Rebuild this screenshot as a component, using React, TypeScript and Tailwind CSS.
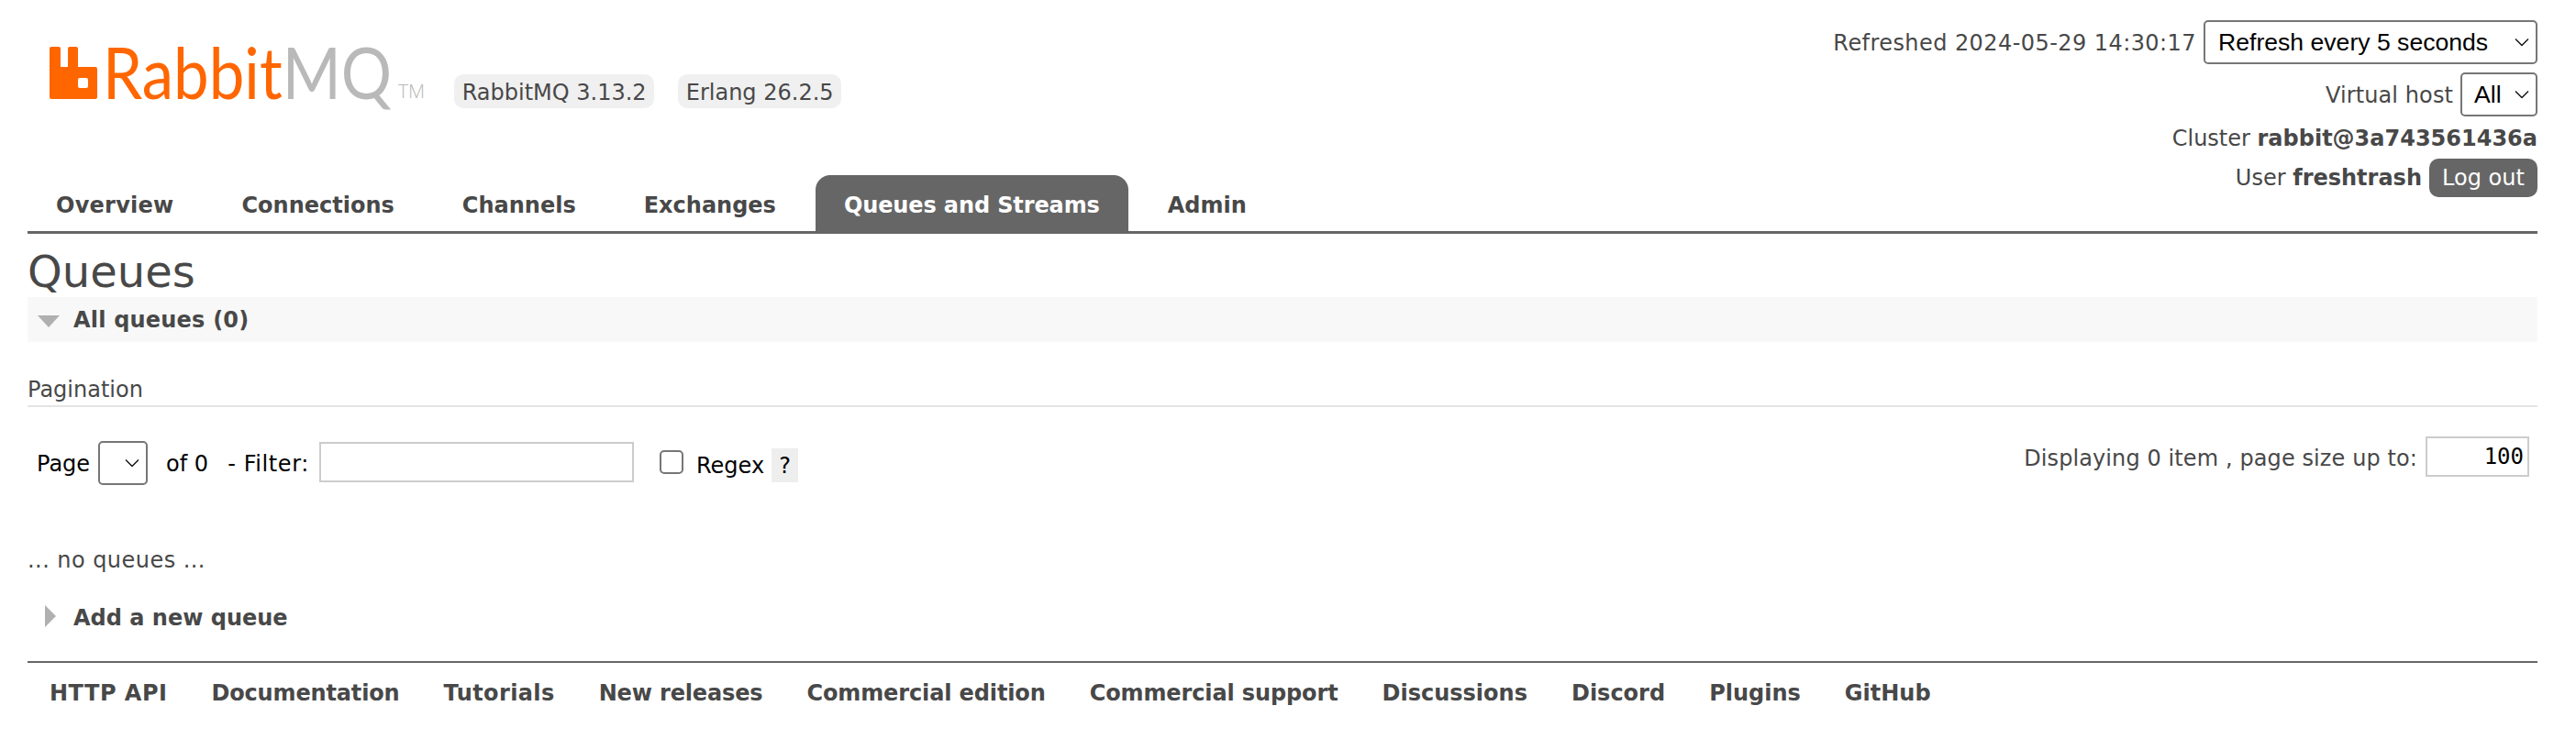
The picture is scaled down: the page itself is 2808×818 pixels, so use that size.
const tabs = [
  { label: 'Overview', text: 'tracking-[0.25px]' },
  { label: 'Connections', text: '' },
  { label: 'Channels', text: '' },
  { label: 'Exchanges', text: '' },
  { label: 'Queues and Streams', text: 'tracking-[-0.12px]' },
  { label: 'Admin', text: '' },
];

const footerLinks = [
  { label: 'HTTP API', text: 'tracking-[0.5px]' },
  { label: 'Documentation', text: 'tracking-[-0.15px]' },
  { label: 'Tutorials', text: 'tracking-[0.4px]' },
  { label: 'New releases', text: 'tracking-[-0.15px]' },
  { label: 'Commercial edition', text: 'tracking-[-0.12px]' },
  { label: 'Commercial support', text: 'tracking-[-0.12px]' },
  { label: 'Discussions', text: '' },
  { label: 'Discord', text: '' },
  { label: 'Plugins', text: '' },
  { label: 'GitHub', text: '' },
];

const Logo = () => (
  <div className="flex items-start text-[#ff6600]">
    <svg width="52" height="57" viewBox="0 0 52 57" className="mt-[1px] shrink-0">
      <path
        fillRule="evenodd"
        fill="#ff6600"
        d="M2 0h8a2 2 0 0 1 2 2v20h8V2a2 2 0 0 1 2-2h7a2 2 0 0 1 2 2v20h19a2 2 0 0 1 2 2v31a2 2 0 0 1-2 2H2a2 2 0 0 1-2-2V2a2 2 0 0 1 2-2zM33 34a2 2 0 0 0-2 2v7a2 2 0 0 0 2 2h7a2 2 0 0 0 2-2v-7a2 2 0 0 0-2-2z"
      />
    </svg>
    <div className="ml-[6px] w-[314px] h-[58px] font-['Lato',sans-serif] font-normal text-[78px] leading-[56px] whitespace-nowrap">
      <span className="inline-block origin-left scale-x-[0.885]">
        Rabbit<span className="text-[#b9b9b9]">MQ</span>
      </span>
    </div>
    <span className="mt-[38px] ml-[8px] font-['Open_Sans',sans-serif] font-light text-[21px] leading-[22px] text-[#b9b9b9]">TM</span>
  </div>
);

const NativeSelect = ({ label, className }: { label: string; className: string }) => (
  <div className={`relative flex items-center border-2 border-[#767676] rounded-[5px] bg-white font-['Liberation_Sans',sans-serif] text-[26.6px] text-black ${className}`}>
    <span className="pt-[2px]">{label}</span>
    <svg width="16" height="9" viewBox="0 0 16 9" fill="none" className="absolute right-[7px] top-1/2 -translate-y-1/2">
      <path d="M1 1l7 7 7-7" stroke="#111111" strokeWidth="1.4" />
    </svg>
  </div>
);

export default function App() {
  return (
    <div className="w-[2808px] h-[818px] bg-white text-[#484848] font-['DejaVu_Sans',sans-serif] text-[24px] pl-[30px] pr-[42px] overflow-hidden">
      <header className="flex justify-between h-[191px]">
        <div className="flex items-start pl-[24px] pt-[50px]">
          <Logo />
          <div className="flex gap-[26px] ml-[32px] mt-[31px]">
            <span className="h-[37px] w-[218px] pt-[2px] flex items-center justify-center rounded-[10px] bg-[#f0f0f0]">RabbitMQ 3.13.2</span>
            <span className="h-[37px] w-[178px] pt-[2px] flex items-center justify-center rounded-[10px] bg-[#f0f0f0]">Erlang 26.2.5</span>
          </div>
        </div>
        <div className="flex flex-col items-end pt-[22px]">
          <div className="flex items-center gap-[8px] h-[48px]">
            <span className="tracking-[0.43px] pt-[2px]">Refreshed 2024-05-29 14:30:17</span>
            <NativeSelect label="Refresh every 5 seconds" className="w-[364px] h-[48px] pl-[14px]" />
          </div>
          <div className="flex items-center gap-[8px] h-[48px] mt-[9px]">
            <span className="tracking-[0.1px] pt-[2px]">Virtual host</span>
            <NativeSelect label="All" className="w-[84px] h-[48px] pl-[13px]" />
          </div>
          <div className="h-[30px] mt-[9px] flex items-center">
            <span>Cluster&nbsp;<b>rabbit@3a743561436a</b></span>
          </div>
          <div className="flex items-center gap-[8px] h-[42px] mt-[7px]">
            <span>User <b>freshtrash</b></span>
            <span className="h-[42px] w-[118px] flex items-center justify-center rounded-[10px] bg-[#666666] text-white">Log out</span>
          </div>
        </div>
      </header>

      <nav className="flex gap-[12px] h-[64px] border-b-[3px] border-[#666666] font-bold">
        {tabs.map((tab) => (
          <div
            key={tab.label}
            className={`px-[31px] pt-[5px] flex items-center h-[61px] rounded-t-[16px] ${tab.text} ${tab.label === 'Queues and Streams' ? 'bg-[#666666] text-white' : ''}`}
          >
            {tab.label}
          </div>
        ))}
      </nav>

      <h1 className="text-[48px] leading-[55px] mt-[14px] mb-[-2px]">Queues</h1>

      <div className="flex items-center h-[49px] mt-[2px] bg-[#f8f8f8] font-bold">
        <svg width="24" height="13" viewBox="0 0 24 13" className="ml-[11px] mr-[15px] mt-[4px]">
          <path d="M0 0h24L12 13z" fill="#b0b0b0" />
        </svg>
        <span className="tracking-[0.2px] pt-[1px]">All queues (0)</span>
      </div>

      <div className="mt-[38px] h-[33px] border-b-2 border-[#e4e4e4] leading-[28px]">Pagination</div>

      <div className="flex justify-between mt-[32px] h-[60px]">
        <div className="flex items-start pl-[10px] text-black">
          <span className="mt-[12px] mr-[9px]">Page</span>
          <NativeSelect label="" className="w-[54px] h-[48px] mt-[5px]" />
          <span className="mt-[12px] ml-[20px]">of 0</span>
          <span className="mt-[12px] ml-[21px] tracking-[0.6px]">- Filter:</span>
          <input className="ml-[11px] mt-[6px] w-[343px] h-[44px] border-2 border-[#cccccc] bg-white" />
          <input type="checkbox" className="ml-[28px] mt-[15px] w-[26px] h-[26px] appearance-none border-2 border-[#767676] rounded-[5px] bg-white" />
          <span className="ml-[14px] mt-[14px]">Regex</span>
          <span className="ml-[8px] mt-[13px] w-[29px] h-[37px] flex items-center justify-center bg-[#eeeeee]">?</span>
        </div>
        <div className="flex items-start">
          <span className="mt-[6px] mr-[9px] tracking-[0.1px]">Displaying 0 item , page size up to:</span>
          <input
            readOnly
            value="100"
            className="w-[113px] h-[44px] border-2 border-[#cccccc] text-right pr-[4px] text-black font-['DejaVu_Sans_Mono',monospace]"
          />
          <span className="w-[9px]" />
        </div>
      </div>

      <p className="mt-[61px] leading-[28px] tracking-[0.45px]">... no queues ...</p>

      <div className="flex items-center h-[30px] mt-[34px] font-bold">
        <svg width="12" height="24" viewBox="0 0 12 24" className="ml-[19px] mr-[19px] mb-[4px]">
          <path d="M0 0l12 12L0 24z" fill="#b0b0b0" />
        </svg>
        Add a new queue
      </div>

      <footer className="mt-[32px] border-t-2 border-[#666666] pt-[18px] pl-[24px] flex gap-[48px] font-bold leading-[30px]">
        {footerLinks.map((link) => (
          <span key={link.label} className={link.text}>{link.label}</span>
        ))}
      </footer>
    </div>
  );
}
